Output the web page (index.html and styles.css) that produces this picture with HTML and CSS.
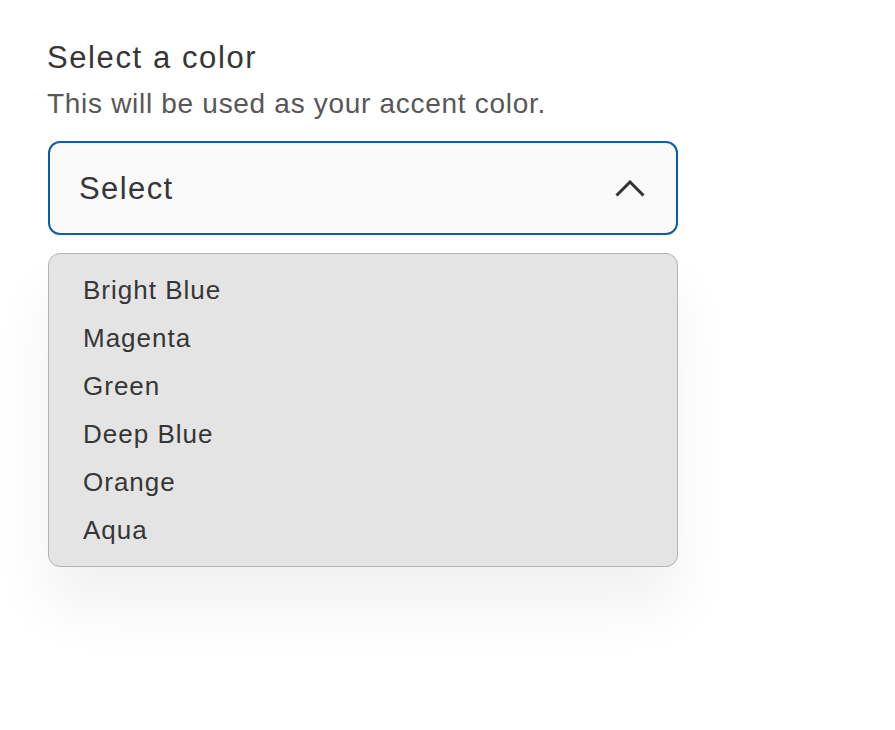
FILE: index.html
```html
<!DOCTYPE html>
<html lang="en">
<head>
<meta charset="utf-8">
<title>Select a color</title>
<link rel="stylesheet" href="styles.css">
</head>
<body>
<div class="field">
  <div class="label">Select a color</div>
  <div class="hint">This will be used as your accent color.</div>
  <div class="select">
    <span class="value">Select</span>
    <svg class="chev" width="30" height="17" viewBox="0 0 30 17"><path d="M1.5 15.5 L15 2 L28.5 15.5" fill="none" stroke="#333" stroke-width="3"/></svg>
  </div>
  <ul class="menu">
    <li>Bright Blue</li>
    <li>Magenta</li>
    <li>Green</li>
    <li>Deep Blue</li>
    <li>Orange</li>
    <li>Aqua</li>
  </ul>
</div>
</body>
</html>
```
FILE: styles.css
```css
html, body { margin: 0; padding: 0; background: #fff; }
body { min-height: 730px; font-family: "Liberation Sans", Arial, sans-serif; color: #333; }
.field { width: 631px; padding: 40px 0 0 47px; }
.label { font-size: 31px; line-height: 36px; letter-spacing: 1.6px; color: #363636; }
.hint { font-size: 28px; line-height: 32px; letter-spacing: 0.7px; color: #575757; margin-top: 12px; }
.select {
  box-sizing: border-box; height: 94px; margin-top: 21px; margin-left: 1px;
  border: 2px solid #0b5cab; border-radius: 12px; background: #fafafa;
  display: flex; align-items: center; justify-content: space-between;
  padding: 2px 31px 0 29px;
}
.value { font-size: 31px; letter-spacing: 1.4px; color: #363636; }
.chev { display: block; margin-top: -2px; }
.menu {
  list-style: none; margin: 18px 0 0 1px; padding: 12px 0 0 34px;
  box-sizing: border-box; height: 314px;
  background: #e4e4e4; border: 1px solid #b3b3b3; border-radius: 12px;
  box-shadow: 0 40px 60px rgba(0,0,0,0.06);
}
.menu li { font-size: 26px; line-height: 48px; letter-spacing: 1px; color: #363636; }
```
